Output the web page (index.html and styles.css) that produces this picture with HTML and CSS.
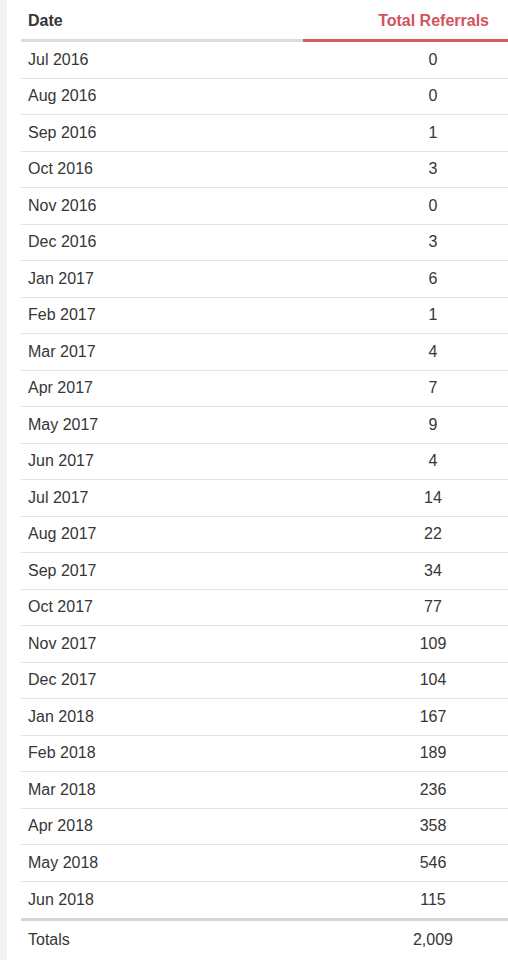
FILE: index.html
```html
<!DOCTYPE html>
<html>
<head>
<meta charset="utf-8">
<link rel="stylesheet" href="styles.css">
</head>
<body>
<div class="page">
  <div class="table">
    <div class="row head">
      <div class="c1">Date</div>
      <div class="c2 active">Total Referrals</div>
    </div>
    <div class="row"><div class="c1">Jul 2016</div><div class="c2">0</div></div>
    <div class="row"><div class="c1">Aug 2016</div><div class="c2">0</div></div>
    <div class="row"><div class="c1">Sep 2016</div><div class="c2">1</div></div>
    <div class="row"><div class="c1">Oct 2016</div><div class="c2">3</div></div>
    <div class="row"><div class="c1">Nov 2016</div><div class="c2">0</div></div>
    <div class="row"><div class="c1">Dec 2016</div><div class="c2">3</div></div>
    <div class="row"><div class="c1">Jan 2017</div><div class="c2">6</div></div>
    <div class="row"><div class="c1">Feb 2017</div><div class="c2">1</div></div>
    <div class="row"><div class="c1">Mar 2017</div><div class="c2">4</div></div>
    <div class="row"><div class="c1">Apr 2017</div><div class="c2">7</div></div>
    <div class="row"><div class="c1">May 2017</div><div class="c2">9</div></div>
    <div class="row"><div class="c1">Jun 2017</div><div class="c2">4</div></div>
    <div class="row"><div class="c1">Jul 2017</div><div class="c2">14</div></div>
    <div class="row"><div class="c1">Aug 2017</div><div class="c2">22</div></div>
    <div class="row"><div class="c1">Sep 2017</div><div class="c2">34</div></div>
    <div class="row"><div class="c1">Oct 2017</div><div class="c2">77</div></div>
    <div class="row"><div class="c1">Nov 2017</div><div class="c2">109</div></div>
    <div class="row"><div class="c1">Dec 2017</div><div class="c2">104</div></div>
    <div class="row"><div class="c1">Jan 2018</div><div class="c2">167</div></div>
    <div class="row"><div class="c1">Feb 2018</div><div class="c2">189</div></div>
    <div class="row"><div class="c1">Mar 2018</div><div class="c2">236</div></div>
    <div class="row"><div class="c1">Apr 2018</div><div class="c2">358</div></div>
    <div class="row"><div class="c1">May 2018</div><div class="c2">546</div></div>
    <div class="row last"><div class="c1">Jun 2018</div><div class="c2">115</div></div>
    <div class="row totals"><div class="c1">Totals</div><div class="c2">2,009</div></div>
  </div>
</div>
</body>
</html>
```
FILE: styles.css
```css
html, body {
  margin: 0;
  padding: 0;
  background: #f3f3f3;
  overflow: hidden;
}
body {
  font-family: "Liberation Sans", Arial, sans-serif;
  font-size: 16px;
  color: #363636;
}
.page {
  margin-left: 7px;
  background: #fff;
  min-height: 960px;
  padding-left: 14px;
}
.table {
  display: flex;
  flex-direction: column;
}
.row {
  display: grid;
  grid-template-columns: 282px 205px;
  height: 36.5px;
  box-sizing: border-box;
  border-bottom: 1px solid #e3e3e3;
  align-items: center;
}
.c1 {
  padding-left: 7px;
}
.c2 {
  text-align: center;
  padding-left: 55px;
}
.head {
  height: 42px;
  border-bottom: none;
  font-weight: bold;
  align-items: stretch;
}
.head .c1, .head .c2 {
  display: flex;
  align-items: center;
  border-bottom: 3px solid #dcdcdc;
  padding-top: 3px;
}
.head .c2.active {
  justify-content: flex-end;
  padding-left: 0;
  padding-right: 19px;
  color: #d4525a;
  border-bottom-color: #d65a60;
}
.last {
  border-bottom: none;
}
.totals {
  border-top: 3px solid #d6d6d6;
  border-bottom: none;
  height: 41px;
}
```
